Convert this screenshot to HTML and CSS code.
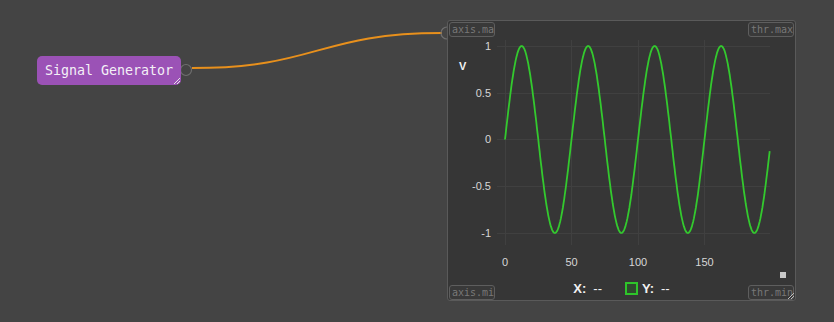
FILE: index.html
```html
<!DOCTYPE html>
<html lang="en">

<head>
    <meta charset="UTF-8">
    <title>Signal Generator</title>
    <link rel="stylesheet" href="styles.css">
</head>

<body>
    <div class="canvas">
        <!-- wire -->
        <svg class="wires" width="834" height="322">
            <path d="M192 68 C 318 68, 318 33, 442 33" fill="none" stroke="#e8901c" stroke-width="2" />
            <circle cx="186" cy="70" r="5.5" fill="none" stroke="#6e6e6e" stroke-width="1.2" />
            <path d="M447 27 A 6 6 0 0 0 447 39" fill="none" stroke="#6e6e6e" stroke-width="1.2" />
        </svg>

        <div class="node gen">
            Signal Generator
            <svg class="grip" width="7" height="7">
                <path d="M1 7 L7 1 M4 7 L7 4" stroke="#e6e6e6" stroke-width="1" />
            </svg>
        </div>

        <div class="node plot">
            <svg class="chart" width="347" height="257" id="chart">
                <g class="grid" stroke="#404040" stroke-width="1">
                    <line x1="49" y1="25.5" x2="322" y2="25.5" />
                    <line x1="49" y1="72.5" x2="322" y2="72.5" />
                    <line x1="49" y1="118.5" x2="322" y2="118.5" />
                    <line x1="49" y1="165.5" x2="322" y2="165.5" />
                    <line x1="49" y1="212.5" x2="322" y2="212.5" />
                    <line x1="57.5" y1="19" x2="57.5" y2="224" />
                    <line x1="123.5" y1="19" x2="123.5" y2="224" />
                    <line x1="190.5" y1="19" x2="190.5" y2="224" />
                    <line x1="256.5" y1="19" x2="256.5" y2="224" />
                </g>
                <g class="ticks" text-anchor="end">
                    <text x="43" y="29">1</text>
                    <text x="43" y="76">0.5</text>
                    <text x="43" y="122">0</text>
                    <text x="43" y="169">-0.5</text>
                    <text x="43" y="216">-1</text>
                </g>
                <g class="ticks" text-anchor="middle">
                    <text x="57" y="245">0</text>
                    <text x="123.5" y="245">50</text>
                    <text x="190" y="245">100</text>
                    <text x="256.5" y="245">150</text>
                </g>
                <text class="unit" x="11" y="49">V</text>
                <polyline id="wave" fill="none" stroke="#33c92e" stroke-width="1.8" stroke-linejoin="round" />
                <rect x="332" y="251" width="6" height="6" fill="#c8c8c8" />
            </svg>
            <div class="legend">
                <b>X:</b><span>--</span>
                <i class="swatch"></i><b>Y:</b><span>--</span>
            </div>

            <div class="port tl">axis.max</div>
            <div class="port tr">thr.max</div>
            <div class="port bl">axis.min</div>
            <div class="port br">thr.min</div>
            <svg class="grip" width="7" height="7">
                <path d="M1 7 L7 1 M4 7 L7 4" stroke="#bdbdbd" stroke-width="1" />
            </svg>
        </div>
    </div>
    <script>
        var pts = [];
        for (var i = 0; i <= 199; i += 0.5) {
            var px = 57 + i * 1.33;
            var py = 118.5 - Math.sin(2 * Math.PI * i / 50) * 93.5;
            pts.push(px.toFixed(1) + "," + py.toFixed(1));
        }
        document.getElementById("wave").setAttribute("points", pts.join(" "));
    </script>
</body>

</html>
```
FILE: styles.css
```css
* {
    box-sizing: border-box;
}

body {
    margin: 0;
    background: #444444;
    font-family: "Liberation Sans", Arial, sans-serif;
}

.canvas {
    width: 834px;
    height: 322px;
    position: relative;
    overflow: hidden;
}

.wires {
    position: absolute;
    left: 0;
    top: 0;
}

/* nodes */
.node {
    position: absolute;
}

.gen {
    left: 37px;
    top: 56px;
    width: 144px;
    height: 29px;
    background: #9b52b6;
    border-radius: 5px;
    color: #f4f0f6;
    font-family: "DejaVu Sans Mono", monospace;
    font-size: 13.3px;
    line-height: 29px;
    text-align: center;
}

.grip {
    position: absolute;
    right: 1px;
    bottom: 1px;
}

.plot {
    left: 447px;
    top: 20px;
    width: 349px;
    height: 281px;
    background: #363636;
    border: 1px solid #5a5a5a;
    border-radius: 3px;
}

.chart {
    display: block;
}

.ticks text {
    fill: #d6d6d6;
    font-size: 11px;
}

.unit {
    fill: #f2f2f2;
    font-size: 11px;
    font-weight: bold;
}

.legend {
    height: 20px;
    display: flex;
    justify-content: center;
    align-items: center;
    color: #f2f2f2;
    font-size: 13px;
}

.legend b {
    margin-right: 7px;
}

.legend span {
    margin-right: 23px;
}

.legend span:last-child {
    margin-right: 0;
}

.swatch {
    width: 13px;
    height: 13px;
    border: 2px solid #2ec42a;
    background: #2f4a2e;
    margin-right: 4px;
}

/* port labels */
.port {
    position: absolute;
    width: 46px;
    height: 15px;
    padding: 0 2px;
    overflow: hidden;
    white-space: nowrap;
    border: 1px solid #5e5e5e;
    border-radius: 3px;
    background: #393939;
    color: #787878;
    font-family: "DejaVu Sans Mono", monospace;
    font-size: 10px;
    line-height: 13px;
}

.tl {
    left: 1px;
    top: 1px;
}

.tr {
    right: 1px;
    top: 1px;
}

.bl {
    left: 1px;
    bottom: 0;
}

.br {
    right: 1px;
    bottom: 0;
}
```
